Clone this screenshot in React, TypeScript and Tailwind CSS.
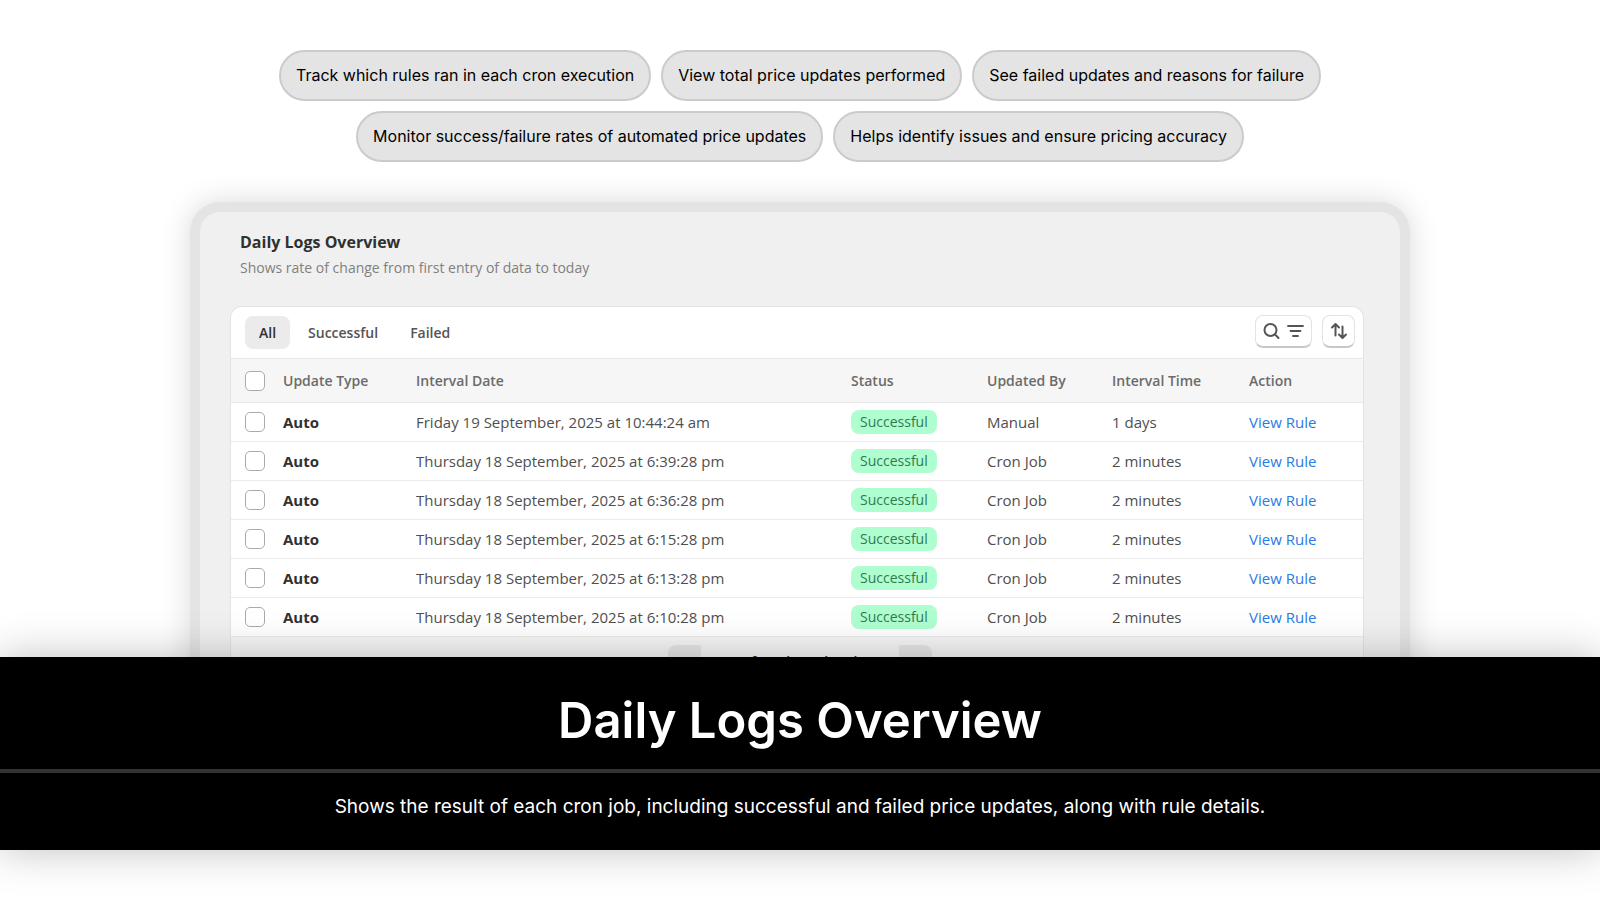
const highlights = [
  "Track which rules ran in each cron execution",
  "View total price updates performed",
  "See failed updates and reasons for failure",
  "Monitor success/failure rates of automated price updates",
  "Helps identify issues and ensure pricing accuracy",
];

const tabs = ["All", "Successful", "Failed"];

const logs = [
  { date: "Friday 19 September, 2025 at 10:44:24 am", by: "Manual", time: "1 days" },
  { date: "Thursday 18 September, 2025 at 6:39:28 pm", by: "Cron Job", time: "2 minutes" },
  { date: "Thursday 18 September, 2025 at 6:36:28 pm", by: "Cron Job", time: "2 minutes" },
  { date: "Thursday 18 September, 2025 at 6:15:28 pm", by: "Cron Job", time: "2 minutes" },
  { date: "Thursday 18 September, 2025 at 6:13:28 pm", by: "Cron Job", time: "2 minutes" },
  { date: "Thursday 18 September, 2025 at 6:10:28 pm", by: "Cron Job", time: "2 minutes" },
];

const Checkbox = ({ label }: { label: string }) => (
  <input
    type="checkbox"
    aria-label={label}
    className="block size-5 appearance-none rounded-[5px] border border-[#aaa] bg-white checked:bg-[#303030]"
  />
);

const SearchIcon = () => (
  <svg viewBox="0 0 18 18" className="size-[18px]" fill="none" stroke="currentColor" strokeWidth="2" strokeLinecap="round">
    <circle cx="7.5" cy="8" r="6" />
    <path d="M12 12.5L15.5 16" />
  </svg>
);

const FilterIcon = () => (
  <svg viewBox="0 0 18 18" className="size-[18px]" fill="none" stroke="currentColor" strokeWidth="1.8" strokeLinecap="round">
    <path d="M1 4h15M3.5 9h10M6 14h5" />
  </svg>
);

const SortIcon = () => (
  <svg viewBox="0 0 18 18" className="size-[18px]" fill="none" stroke="currentColor" strokeWidth="2" strokeLinecap="round" strokeLinejoin="round">
    <path d="M5.5 13.5V2.5M2 5.5l3.5-3.5L9 5.5M12.5 4.5v11M9 12.5l3.5 3.5 3.5-3.5" />
  </svg>
);

const LogsTable = () => (
  <table className="w-full table-fixed border-collapse text-left text-[15px] text-[#4f4f4f]">
    <colgroup>
      <col className="w-[52px]" />
      <col className="w-[133px]" />
      <col />
      <col className="w-[136px]" />
      <col className="w-[125px]" />
      <col className="w-[137px]" />
      <col className="w-[114px]" />
    </colgroup>
    <thead>
      <tr className="h-11 border-y border-[#e8e8e8] bg-[#f6f6f6] text-sm text-[#6b6b6b]">
        <th className="pl-[14px]">
          <Checkbox label="Select all logs" />
        </th>
        <th className="font-semibold">Update Type</th>
        <th className="font-semibold">Interval Date</th>
        <th className="font-semibold">Status</th>
        <th className="font-semibold">Updated By</th>
        <th className="font-semibold">Interval Time</th>
        <th className="font-semibold">Action</th>
      </tr>
    </thead>
    <tbody>
      {logs.map((log) => (
        <tr key={log.date} className="h-[39px] border-b border-[#ebebeb]">
          <td className="pl-[14px]">
            <Checkbox label={log.date} />
          </td>
          <td className="font-bold text-[#303030]">Auto</td>
          <td>{log.date}</td>
          <td>
            <span className="block w-fit rounded-lg bg-[#affed0] px-[9px] text-sm leading-6 text-[#2f7a52]">
              Successful
            </span>
          </td>
          <td>{log.by}</td>
          <td>{log.time}</td>
          <td>
            <a href="#rule" className="text-[#2a7be4]">
              View Rule
            </a>
          </td>
        </tr>
      ))}
    </tbody>
  </table>
);

const App = () => {
  return (
    <main className="overflow-hidden bg-white pt-[50px] pb-[50px] font-['Inter',sans-serif] text-black">
      <ul className="mx-auto flex max-w-[1200px] flex-wrap justify-center gap-[10px]">
        {highlights.map((text) => (
          <li
            key={text}
            className="rounded-full border-2 border-[#cbcbcb] bg-[#e4e4e4] px-[15px] py-3 text-base leading-[23px]"
          >
            {text}
          </li>
        ))}
      </ul>

      <section className="mx-auto mt-10 max-w-[1220px] rounded-t-[30px] border-[10px] border-b-0 border-[#e4e4e4] bg-[#f0f0f0] pr-[36px] pl-[30px] font-['Open_Sans',sans-serif] shadow-[0_0_30px_rgba(0,0,0,0.15)]">
        <header className="px-[10px] pt-[18px] pb-[26px]">
          <h2 className="text-base leading-6 font-bold text-[#303030]">Daily Logs Overview</h2>
          <p className="mt-[2px] text-sm leading-6 text-[#808080]">
            Shows rate of change from first entry of data to today
          </p>
        </header>

        <div className="overflow-hidden rounded-t-xl border border-b-0 border-[#e3e3e3] bg-white">
          <div className="flex h-[51px] items-center justify-between pr-2 pl-[14px]">
            <div className="flex gap-1 text-sm font-semibold text-[#555]">
              {tabs.map((tab, index) => (
                <button
                  key={tab}
                  type="button"
                  className={
                    index === 0
                      ? "h-[33px] rounded-lg bg-[#ebebeb] px-[14px] text-[#303030]"
                      : "h-[33px] rounded-lg px-[14px]"
                  }
                >
                  {tab}
                </button>
              ))}
            </div>
            <div className="flex gap-[10px] pb-[3px] text-[#555]">
              <button
                type="button"
                aria-label="Search and filter"
                className="flex h-[33px] w-[57px] items-center justify-center gap-[6px] rounded-lg border border-b-2 border-[#e3e3e3] border-b-[#c8c8c8]"
              >
                <SearchIcon />
                <FilterIcon />
              </button>
              <button
                type="button"
                aria-label="Sort"
                className="flex h-[33px] w-[33px] items-center justify-center rounded-lg border border-b-2 border-[#e3e3e3] border-b-[#c8c8c8]"
              >
                <SortIcon />
              </button>
            </div>
          </div>
          <LogsTable />
          <div className="flex h-[52px] justify-center bg-[#f6f6f6] pt-2 pl-[5px] text-sm">
            <button type="button" aria-label="Previous page" className="h-8 w-[33px] rounded-l-lg bg-[#e6e6e6] text-[#4f4f4f]">
              ‹
            </button>
            <span className="w-[198px] text-center leading-[34px] font-semibold text-[#303030]">
              1-6 of 6 rule update logs
            </span>
            <button type="button" aria-label="Next page" className="h-8 w-[33px] rounded-r-lg bg-[#e6e6e6] text-[#4f4f4f]">
              ›
            </button>
          </div>
        </div>
      </section>

      {/* caption band covers the lower edge of the panel */}
      <section className="relative z-10 -mt-8 bg-black text-center text-white shadow-[0_0_40px_rgba(0,0,0,0.25)]">
        <h1 className="border-b-4 border-[#333] pt-[34px] pb-[18px] text-[49px] leading-[60px] font-semibold">
          Daily Logs Overview
        </h1>
        <p className="px-5 pt-[19px] pb-[28px] text-[19px] leading-[30px]">
          Shows the result of each cron job, including successful and failed price updates, along with rule details.
        </p>
      </section>
    </main>
  );
};

export default App;
